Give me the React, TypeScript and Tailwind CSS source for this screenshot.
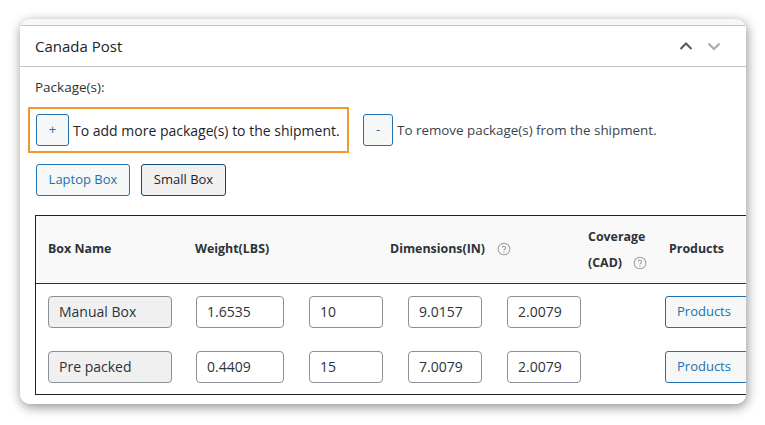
import React from 'react'

const font = "font-['Open_Sans','Noto_Sans',sans-serif]"

function Chevron({ up, className }: { up?: boolean; className?: string }) {
  return (
    <svg width="16" height="16" viewBox="0 0 16 16" className={className} fill="none">
      <path
        d={up ? 'M2.5 11 L8 5.5 L13.5 11' : 'M2.5 5.5 L8 11 L13.5 5.5'}
        stroke="currentColor"
        strokeWidth="2"
      />
    </svg>
  )
}

function HelpIcon({ className }: { className?: string }) {
  return (
    <svg width="14" height="14" viewBox="0 0 24 24" fill="none" className={className}>
      <circle cx="12" cy="12" r="10" stroke="currentColor" strokeWidth="1.8" />
      <path
        d="M9.1 9a3 3 0 0 1 5.8 1c0 2-3 2.6-3 4"
        stroke="currentColor"
        strokeWidth="1.8"
        strokeLinecap="round"
      />
      <path d="M11.9 17.5h.02" stroke="currentColor" strokeWidth="2.2" strokeLinecap="round" />
    </svg>
  )
}

type Row = { name: string; weight: string; dims: [string, string, string] }

const rows: Row[] = [
  { name: 'Manual Box', weight: '1.6535', dims: ['10', '9.0157', '2.0079'] },
  { name: 'Pre packed', weight: '0.4409', dims: ['15', '7.0079', '2.0079'] },
]

const inputCls =
  'h-[32px] rounded-[4px] border border-[#8c8f94] pl-[10px] flex items-center text-[14px] text-[#2c3338]'

export default function App() {
  return (
    <div className={`w-[765px] h-[425px] bg-white pt-[19px] pl-[20px] ${font}`}>
      <div className="w-[726px] h-[385px] rounded-[10px] overflow-hidden bg-[#f7f7f7] pt-[6px] shadow-[1px_3px_12px_rgba(0,0,0,0.45)]">
        <div className="h-full bg-white border-t border-[#c3c4c7]">
          {/* metabox header */}
          <div className="h-[41px] border-b border-[#c3c4c7] flex items-center justify-between pl-[15px] pr-[24px]">
            <span className="text-[15px] font-medium text-[#1d2327]">Canada Post</span>
            <div className="flex items-center gap-[12px]">
              <Chevron up className="text-[#50575e]" />
              <Chevron className="text-[#a7aaad]" />
            </div>
          </div>

          <div className="pl-[15px] pt-[10px]">
            <div className="text-[13.5px] leading-[20px] text-[#2c3338]">Package(s):</div>

            <div className="mt-[10px] flex items-center">
              <div className="-ml-[7px] w-[321px] h-[46px] border-2 border-[#f0982a] pl-[6px] flex items-center">
                <button className="w-[33px] h-[32px] rounded-[3px] border border-[#2271b1] bg-[#f6f7f7] text-[#2271b1] text-[13px]">
                  +
                </button>
                <span className="ml-[4px] text-[14px] text-[#1d2327] whitespace-nowrap">
                  To add more package(s) to the shipment.
                </span>
              </div>
              <button className="ml-[14px] w-[30px] h-[32px] rounded-[3px] border border-[#2271b1] bg-[#f6f7f7] text-[#2271b1] text-[13px]">
                -
              </button>
              <span className="ml-[4px] text-[13.4px] text-[#3c434a] whitespace-nowrap">
                To remove package(s) from the shipment.
              </span>
            </div>

            <div className="mt-[11px] ml-[1px] flex items-center gap-[11px]">
              <button className="w-[94px] h-[32px] rounded-[3px] border border-[#2271b1] bg-[#f6f7f7] text-[#2271b1] text-[13px]">
                Laptop Box
              </button>
              <button className="w-[85px] h-[32px] rounded-[3px] border border-[#0a4b78] bg-[#f0f0f1] text-[#1d2327] text-[13px]">
                Small Box
              </button>
            </div>

            {/* packages table */}
            <div className="mt-[19px] w-[760px] border border-[#1d2327]">
              <div className="h-[68px] bg-[#f9f9f9] border-b border-[#2c3338] flex items-center text-[12.4px] font-bold text-[#2c3338] pl-[12px]">
                <div className="w-[147px]">Box Name</div>
                <div className="w-[195px]">Weight(LBS)</div>
                <div className="w-[198px] flex items-center gap-[12px]">
                  <span>Dimensions(IN)</span>
                  <HelpIcon className="text-[#a0a0a0]" />
                </div>
                <div className="w-[81px] leading-[26px]">
                  <div>Coverage</div>
                  <div className="flex items-center gap-[11px]">
                    <span>(CAD)</span>
                    <HelpIcon className="text-[#a0a0a0]" />
                  </div>
                </div>
                <div>Products</div>
              </div>

              {rows.map((r) => (
                <div key={r.name} className="h-[55px] flex items-center pl-[12px]">
                  <div className={`${inputCls} w-[124px] bg-[#f0f0f1]`}>{r.name}</div>
                  <div className={`${inputCls} ml-[24px] w-[88px] bg-white`}>{r.weight}</div>
                  {r.dims.map((d, i) => (
                    <div key={i} className={`${inputCls} ml-[25px] w-[74px] bg-white`}>
                      {d}
                    </div>
                  ))}
                  <button className="ml-[84px] w-[100px] h-[32px] rounded-[3px] border border-[#2271b1] bg-[#f6f7f7] text-[#2271b1] text-[13px] text-left pl-[11px]">
                    Products
                  </button>
                </div>
              ))}
            </div>
          </div>
        </div>
      </div>
    </div>
  )
}
